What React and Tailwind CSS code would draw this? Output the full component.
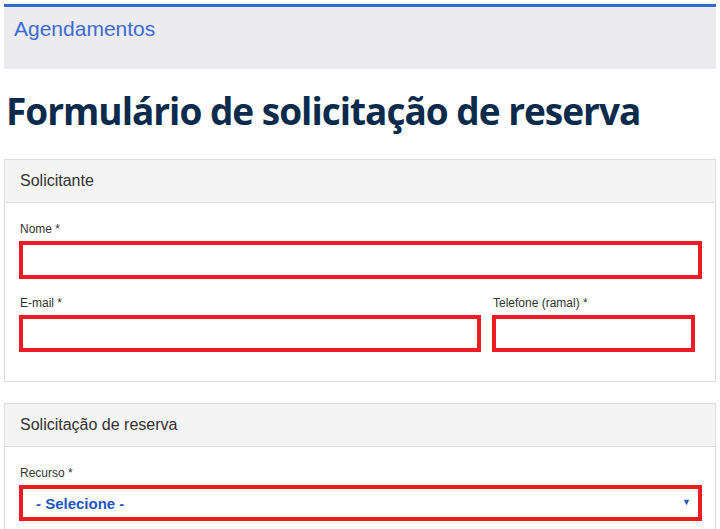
export default function App() {
  return (
    <div className="min-h-screen bg-white px-1 pt-1 font-['Liberation_Sans',Arial,sans-serif] text-[#333]">
      {/* BREADCRUMB */}
      <div className="border-t-[3px] border-[#3169d1] bg-[#ececee] h-[65px] px-[10px] pt-[10px]">
        <a className="text-[21px] leading-[24px] text-[#3d6ad6]">Agendamentos</a>
      </div>

      {/* TITLE */}
      <h1 className="mt-[20px] ml-[2px] font-['Open_Sans',sans-serif] font-bold text-[37px] leading-[44px] tracking-[-1px] text-[#0b2b4c]">
        Formulário de solicitação de reserva
      </h1>

      {/* SOLICITANTE */}
      <div className="mt-[26px] border border-[#dcdcdc]">
        <div className="bg-[#f4f4f4] border-b border-[#dcdcdc] h-[43px] px-[15px] flex items-center text-[16px]">
          Solicitante
        </div>
        <div className="px-[14px] pt-[18px] pb-[29px]">
          <label className="block pl-px text-[12px] leading-[16px] mb-[4px]">Nome *</label>
          <input className="block w-[683px] h-[38px] border-4 border-[#ed1c24] bg-white outline-none" />

          <div className="flex gap-[11px] mt-[16px]">
            <div>
              <label className="block pl-px text-[12px] leading-[16px] mb-[4px]">E-mail *</label>
              <input className="block w-[462px] h-[37px] border-4 border-[#ed1c24] bg-white outline-none" />
            </div>
            <div>
              <label className="block pl-px text-[12px] leading-[16px] mb-[4px]">Telefone (ramal) *</label>
              <input className="block w-[203px] h-[37px] border-4 border-[#ed1c24] bg-white outline-none" />
            </div>
          </div>
        </div>
      </div>

      {/* SOLICITACAO */}
      <div className="mt-[21px] border border-[#dcdcdc]">
        <div className="bg-[#f4f4f4] border-b border-[#dcdcdc] h-[43px] px-[15px] flex items-center text-[16px]">
          Solicitação de reserva
        </div>
        <div className="px-[14px] pt-[18px] pb-[20px]">
          <label className="block pl-px text-[12px] leading-[16px] mb-[4px]">Recurso *</label>
          <div className="w-[683px] h-[36px] border-4 border-[#ed1c24] bg-white flex items-center justify-between pl-[13px] pr-[7px]">
            <span className="text-[15px] font-bold text-[#2456c2] pt-[2px]">- Selecione -</span>
            <span className="text-[9px] text-[#2456c2]">▼</span>
          </div>
        </div>
      </div>
    </div>
  );
}
